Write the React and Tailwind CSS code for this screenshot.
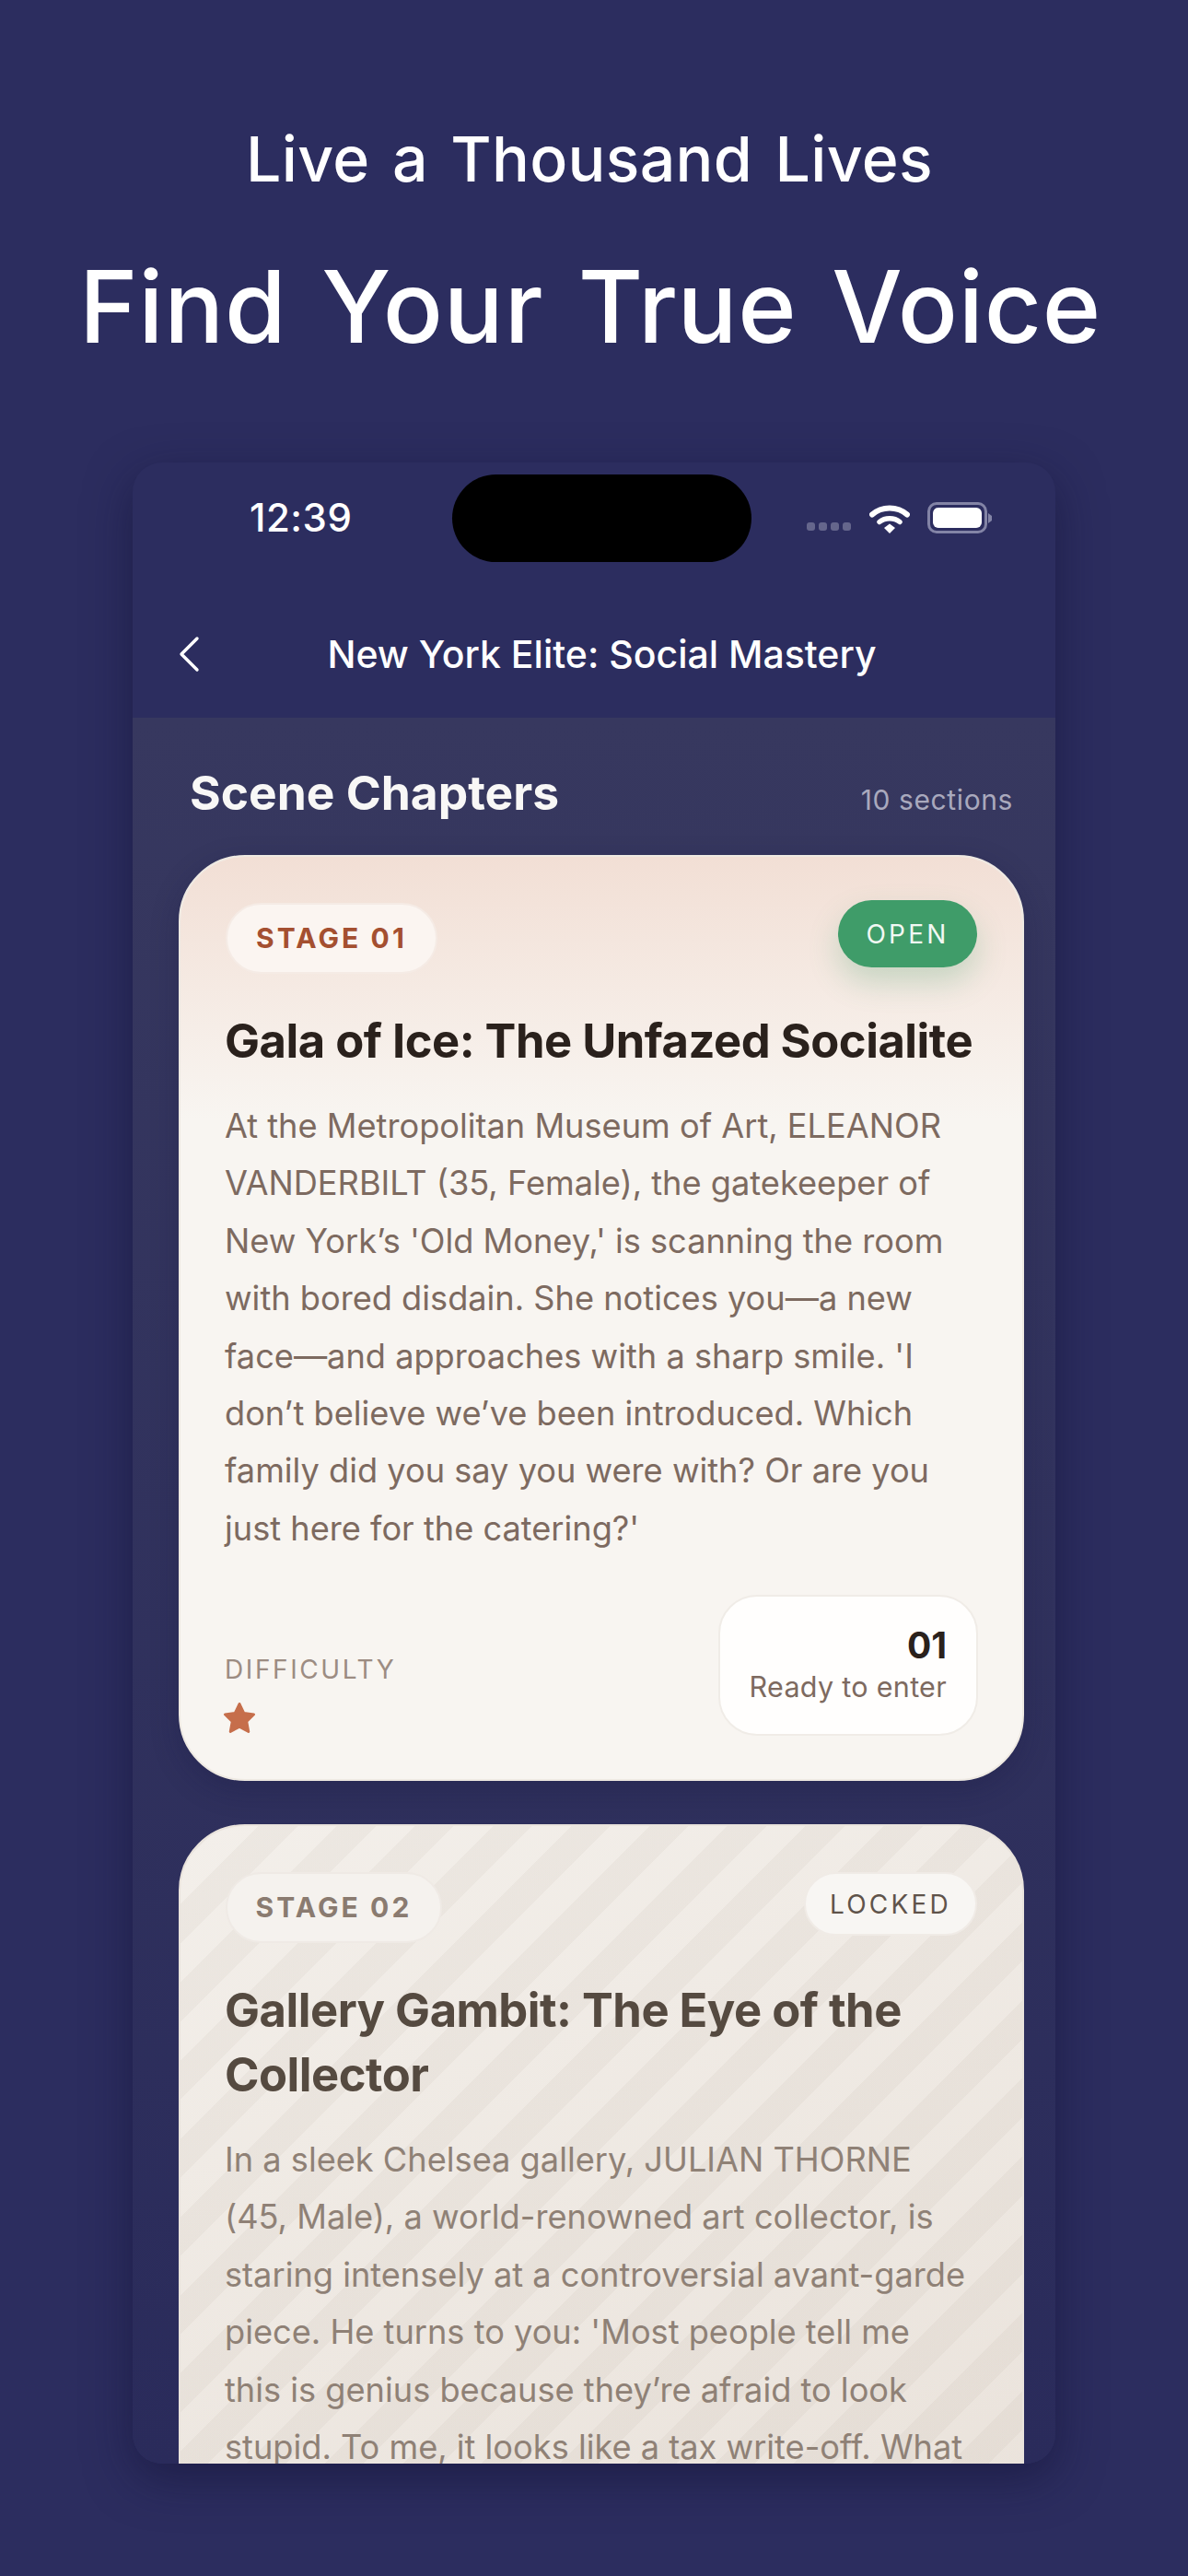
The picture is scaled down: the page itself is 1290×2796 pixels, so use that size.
import React from 'react';

const ui = "font-['Inter','Noto_Sans',sans-serif]";

function StatusBar() {
  return (
    <div className="flex items-center h-[94px] mt-[13px] pl-[127px] pr-[68px] justify-between">
      <span className="w-[162px] text-[42px] leading-none font-medium text-white tracking-[0.5px]">12:39</span>
      {/* Dynamic island */}
      <div className="w-[325px] h-[95px] rounded-full bg-black"></div>
      <div className="flex items-center w-[205px] justify-end">
        <div className="flex gap-[4px] mt-[18px] mr-[20px]">
          <span className="w-[9px] h-[9px] rounded-[3px] bg-[#65668c]"></span>
          <span className="w-[9px] h-[9px] rounded-[3px] bg-[#65668c]"></span>
          <span className="w-[9px] h-[9px] rounded-[3px] bg-[#65668c]"></span>
          <span className="w-[9px] h-[9px] rounded-[3px] bg-[#65668c]"></span>
        </div>
        <svg width="44" height="33" viewBox="0 0 44 33" className="mr-[19px]" fill="none">
          <path d="M3 12.5C13.5 3 30.5 3 41 12.5" stroke="white" strokeWidth="6" strokeLinecap="round" />
          <path d="M11 20.5C17 15.5 27 15.5 33 20.5" stroke="white" strokeWidth="5.5" strokeLinecap="round" />
          <path d="M16 27L22 22.5L28 27L22 33Z" fill="white" />
        </svg>
        <div className="relative w-[65px] h-[34px] rounded-[10px] border-[3px] border-[#8384a6] p-[3px]">
          <div className="w-full h-full rounded-[6px] bg-white"></div>
        </div>
        <svg width="5" height="11" viewBox="0 0 5 11" className="ml-[1px]">
          <path d="M0 0L4 3V8L0 11Z" fill="#8384a6" />
        </svg>
      </div>
    </div>
  );
}

function NavBar() {
  return (
    <div className="relative flex items-center justify-center h-[170px] pt-[32px] pl-[17px]">
      <svg width="26" height="40" viewBox="0 0 26 40" fill="none" className="absolute left-[48px] top-[81px]">
        <path d="M22 3L5 20L22 37" stroke="white" strokeWidth="3.4" strokeLinecap="round" strokeLinejoin="round" />
      </svg>
      <h2 className="text-[41px] leading-none font-medium text-white">New York Elite: Social Mastery</h2>
    </div>
  );
}

function Star() {
  return (
    <svg width="38" height="38" viewBox="0 0 34 34">
      <path d="M17 3L21.3 12L31 13.3L24 20.2L25.8 30L17 25.2L8.2 30L10 20.2L3 13.3L12.7 12Z" fill="#c66e4b" stroke="#c66e4b" strokeWidth="2.5" strokeLinejoin="round" />
    </svg>
  );
}

function OpenCard() {
  return (
    <div className="relative shrink-0 h-[1005px] rounded-[72px] bg-[#f8f5f1] border-2 border-[#eee9e2] overflow-hidden shadow-[0_10px_30px_rgba(20,20,60,0.25)]">
      {/* peach wash at the top of the card */}
      <div className="absolute inset-x-0 top-0 h-[285px] bg-gradient-to-b from-[#f2dfd5] to-[#f8f5f1]"></div>
      <div className="relative flex flex-col h-full pl-[48px] pr-[49px] pt-[50px]">
        <div className="flex justify-between items-start">
          <div className="ml-[1px] h-[77px] w-[230px] flex items-center justify-center rounded-full bg-[#fbf5f1] border-2 border-[#f5ebe5] text-[30px] font-bold tracking-[3.1px] text-[#a44f30]">
            STAGE 01
          </div>
          <div className="h-[73px] w-[151px] -mt-[3px] flex items-center justify-center rounded-full bg-[#3f9c69] text-[28px] tracking-[3.2px] text-[#f1f8f3] shadow-[0_16px_32px_rgba(63,156,105,0.25)]">
            OPEN
          </div>
        </div>
        <h3 className="mt-[38px] text-[50.7px] leading-[70px] font-bold text-[#2a211c] tracking-[-0.5px] whitespace-nowrap">
          Gala of Ice: The Unfazed Socialite
        </h3>
        <p className="mt-[26px] text-[36.2px] leading-[62.4px] text-[#7d6a60]">
          At the Metropolitan Museum of Art, ELEANOR VANDERBILT (35, Female), the gatekeeper of New York’s 'Old Money,' is scanning the room with bored disdain. She notices you—a new face—and approaches with a sharp smile. 'I don’t believe we’ve been introduced. Which family did you say you were with? Or are you just here for the catering?'
        </p>
        <div className="flex justify-between items-end mt-[41px]">
          <div>
            <div className="text-[28px] leading-[34px] tracking-[2.6px] text-[#9c8c82]">DIFFICULTY</div>
            <div className="mt-[17px] -ml-[3px]"><Star /></div>
          </div>
          <div className="w-[282px] h-[153px] -mr-[1px] rounded-[42px] bg-[#fffefd] border-2 border-[#f0ece7] flex flex-col items-end justify-center pr-[32px]">
            <span className="text-[39px] leading-[46px] font-bold text-[#2a211c]">01</span>
            <span className="text-[30.5px] leading-[44px] tracking-[0.3px] text-[#7d6a60]">Ready to enter</span>
          </div>
        </div>
      </div>
    </div>
  );
}

function LockedCard() {
  return (
    <div className="shrink-0 h-[1005px] rounded-[72px] border-2 border-[#e9e3dc] overflow-hidden bg-[repeating-linear-gradient(135deg,rgba(120,100,80,0.05)_0px,rgba(120,100,80,0.05)_30px,rgba(255,255,255,0)_30px,rgba(255,255,255,0)_60px),linear-gradient(160deg,#f3efea,#e8e0d8)]">
      <div className="flex flex-col pl-[48px] pr-[49px] pt-[50px]">
        <div className="flex justify-between items-start">
          <div className="ml-[1px] h-[77px] w-[235px] flex items-center justify-center rounded-full bg-[#f5f2ee] border-2 border-[#efeae5] text-[30px] font-bold tracking-[3.1px] text-[#8a7b70]">
            STAGE 02
          </div>
          <div className="h-[69px] w-[188px] flex items-center justify-center rounded-full bg-[#f8f6f3] border-2 border-[#f0ebe6] text-[28px] tracking-[3.2px] text-[#5f534a]">
            LOCKED
          </div>
        </div>
        <h3 className="mt-[38px] text-[50.7px] leading-[70px] font-bold text-[#554a40] tracking-[-0.5px]">
          Gallery Gambit: The Eye of the Collector
        </h3>
        <p className="mt-[26px] pr-[6px] text-[36.2px] leading-[62.4px] text-[#8f8176]">
          In a sleek Chelsea gallery, JULIAN THORNE (45, Male), a world-renowned art collector, is staring intensely at a controversial avant-garde piece. He turns to you: 'Most people tell me this is genius because they’re afraid to look stupid. To me, it looks like a tax write-off. What do you see?'
        </p>
      </div>
    </div>
  );
}

export default function App() {
  return (
    <div className="w-[1290px] h-[2796px] overflow-hidden bg-[#2c2d5f] flex flex-col items-center">
      {/* Hero */}
      <h1 className="mt-[126px] pr-[10px] text-[68px] leading-[92px] font-medium text-white tracking-[0.3px] [word-spacing:6px] font-['Inter','Noto_Sans',sans-serif]">
        Live a Thousand Lives
      </h1>
      <h1 className="mt-[45px] pr-[8px] text-[108px] leading-[140px] font-medium text-white tracking-[0.8px] [word-spacing:8px] font-['Inter','Noto_Sans',sans-serif]">
        Find Your True Voice
      </h1>
      {/* Phone screen */}
      <div className={`mt-[99px] w-[1002px] h-[2172px] rounded-[32px] overflow-hidden flex flex-col bg-[#2c2d5f] shadow-[0_16px_50px_rgba(15,15,50,0.5)] ${ui}`}>
        <StatusBar />
        <NavBar />
        <div className="flex-1 min-h-0 overflow-hidden flex flex-col pl-[50px] pr-[34px] bg-gradient-to-b from-[#37385f] to-[#2a2b5b]">
          <div className="flex justify-between items-end h-[149px] pb-[36px] pl-[12px] shrink-0">
            <h2 className="text-[51.5px] leading-[64px] font-bold text-[#f8f7f6]">Scene Chapters</h2>
            <span className="mr-[12px] mb-[4px] text-[30px] leading-[40px] tracking-[0.6px] text-[#a9a9bd]">10 sections</span>
          </div>
          <div className="flex flex-col gap-[47px]">
            <OpenCard />
            <LockedCard />
          </div>
        </div>
      </div>
    </div>
  );
}
